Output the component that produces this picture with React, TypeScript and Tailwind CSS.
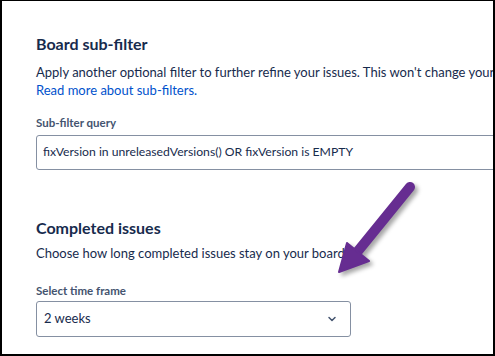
import { ChevronDown } from 'lucide-react';

const font = { fontFamily: 'Lato, "Noto Sans", sans-serif' };

const CalloutArrow = () => (
  <svg
    className="absolute left-[330px] top-[176px] [filter:drop-shadow(3px_3px_2px_rgba(0,0,0,0.35))]"
    width="90"
    height="105"
    viewBox="330 176 90 105"
  >
    <line x1="408" y1="186" x2="356" y2="250" stroke="#662d91" strokeWidth="10" strokeLinecap="round" />
    <polygon points="337,271 345,242 367,260" fill="#662d91" stroke="#662d91" strokeWidth="2" strokeLinejoin="round" />
  </svg>
);

const App = () => {
  return (
    <div
      className="relative h-[356px] w-[495px] overflow-hidden border-t border-r-2 border-b-2 border-l-2 border-black bg-white text-[#172b4d]"
      style={font}
    >
      <div className="w-[640px] pl-[34px] pt-[33px]">
        <h2 className="text-[16px] font-bold leading-5">Board sub-filter</h2>
        <p className="mt-[9px] whitespace-nowrap text-[13px] leading-[18px]">
          Apply another optional filter to further refine your issues. This won't change your board's saved filter.
        </p>
        <a className="block text-[13px] leading-[18px] text-[#0052cc]">Read more about sub-filters.</a>

        <label className="mt-[16px] block text-[11.5px] font-bold leading-4 text-[#44546f]">Sub-filter query</label>
        <div className="mt-[4px] flex h-[35px] w-[600px] items-center rounded-[3px] border border-[#8590a2] px-[6px] text-[12.2px]">
          fixVersion in unreleasedVersions() OR fixVersion is EMPTY
        </div>

        <h2 className="mt-[48px] text-[16px] font-bold leading-5">Completed issues</h2>
        <p className="mt-[6px] text-[13px] leading-[18px]">Choose how long completed issues stay on your board</p>

        <label className="mt-[21px] block text-[11.5px] font-bold leading-4 text-[#44546f]">Select time frame</label>
        <div className="mt-[2px] flex h-[36px] w-[315px] items-center justify-between rounded-[3px] border border-[#8590a2] pl-[7px] pr-[12px] text-[13px]">
          <span>2 weeks</span>
          <ChevronDown className="h-[12px] w-[12px] text-[#44546f]" strokeWidth={3} />
        </div>
      </div>
      <CalloutArrow />
    </div>
  );
};

export default App;
